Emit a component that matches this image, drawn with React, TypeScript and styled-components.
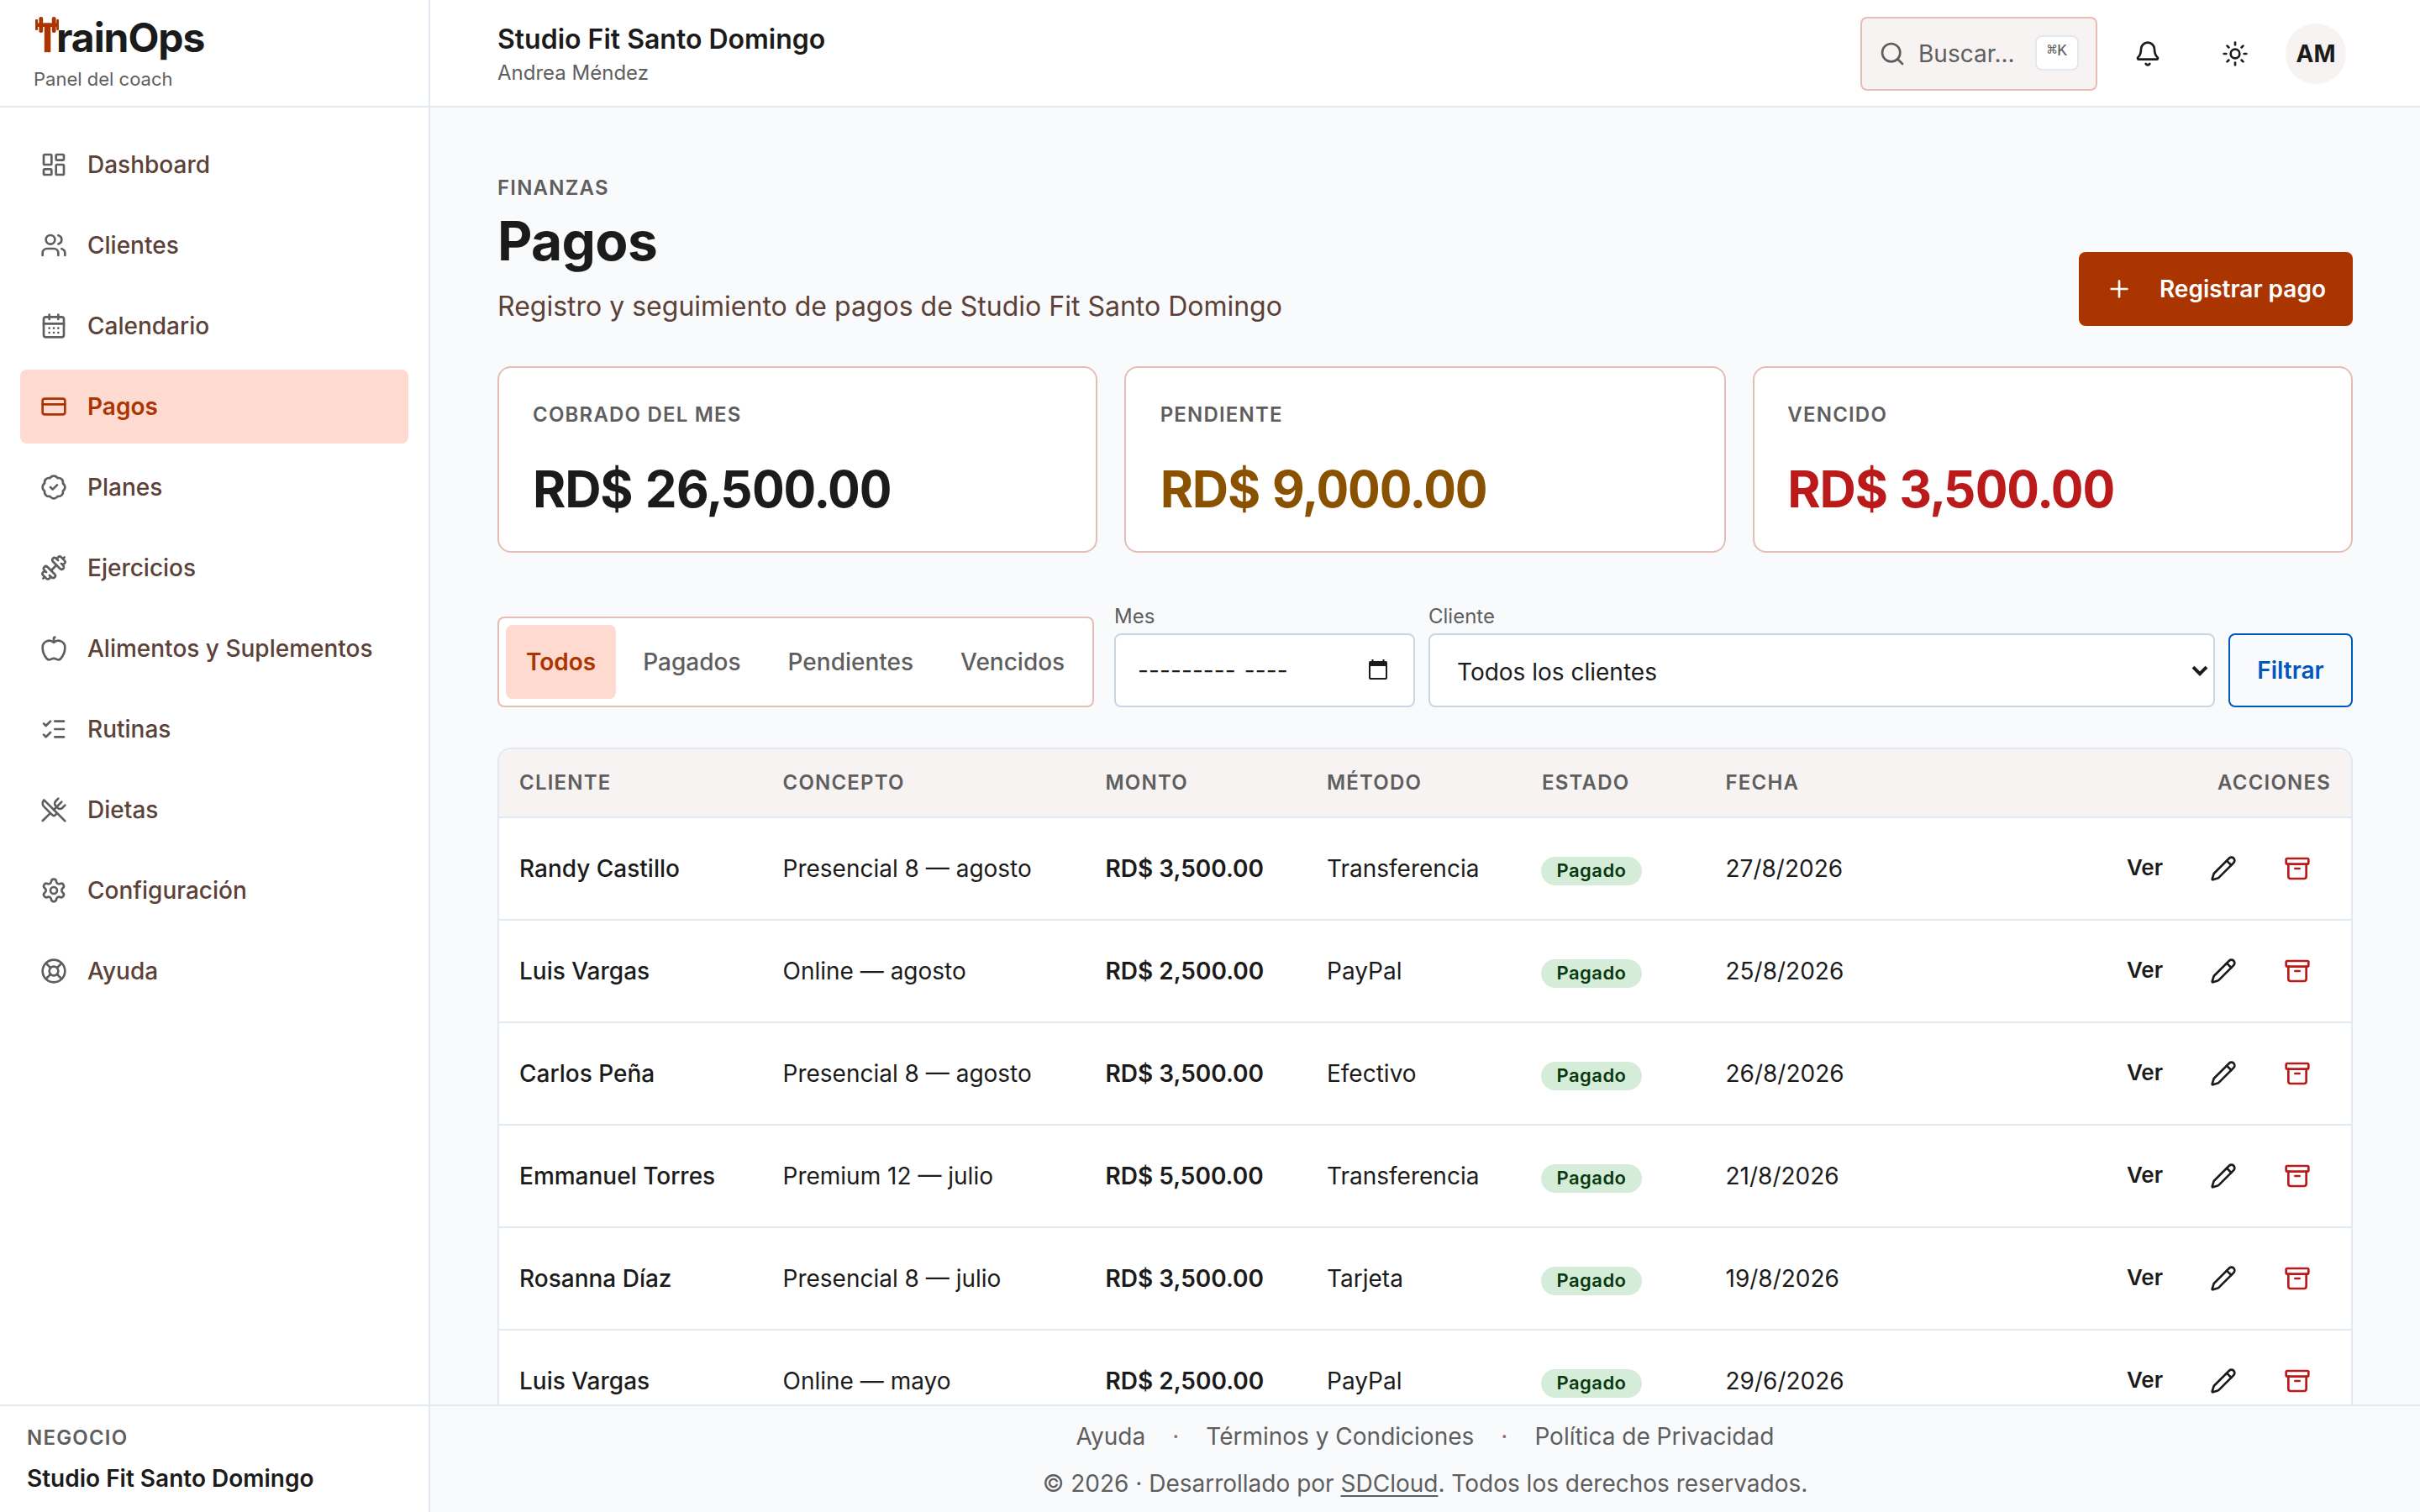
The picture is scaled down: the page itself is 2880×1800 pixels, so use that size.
import React from 'react';
import styled, { createGlobalStyle } from 'styled-components';
import {
  Apple, Archive, BadgeCheck, Bell, CalendarDays, CreditCard, Dumbbell, LayoutDashboard,
  LifeBuoy, ListChecks, Pencil, Plus, Search, Settings, Sun, Users, UtensilsCrossed,
} from 'lucide-react';

const c = {
  bg: '#f8fafc',
  white: '#ffffff',
  line: '#e2e8f0',
  field: '#cbd5e1',
  blush: '#e4beb4',
  peach: '#ffdad0',
  primary: '#ab3500',
  ink: '#1c1b1b',
  brown: '#5b4137',
  gray: '#5f5e5e',
  soft: '#f6f3f2',
  blue: '#0058be',
  amber: '#8a5100',
  red: '#ba1a1a',
};

const GlobalStyle = createGlobalStyle`
  *, *::before, *::after { box-sizing: border-box; }
  body {
    margin: 0;
    background: ${c.bg};
    color: ${c.ink};
    font-family: Inter, "Liberation Sans", sans-serif;
    font-size: 28px;
    line-height: 40px;
    -webkit-font-smoothing: antialiased;
  }
  button { font: inherit; color: inherit; border: 0; background: none; padding: 0; }
  a { color: inherit; text-decoration: none; }
  h1, p { margin: 0; }
  svg { display: block; flex: none; }
`;

const Shell = styled.div`
  display: grid;
  grid-template-columns: 512px 1fr;
  height: 1800px;
  overflow: hidden;
`;

const Sidebar = styled.aside`
  display: flex;
  flex-direction: column;
  background: ${c.white};
  border-right: 2px solid ${c.line};
`;

const Brand = styled.div`
  height: 128px;
  padding: 16px 40px 0;
  border-bottom: 2px solid ${c.line};
`;

const Logo = styled.div`
  display: flex;
  height: 60px;
  font-size: 48px;
  line-height: 58px;
  font-weight: 700;
  letter-spacing: -1.06px;
  svg { margin-right: -3px; }
`;

const Tagline = styled.p`
  margin-top: 2px;
  font-size: 22px;
  line-height: 32px;
  color: ${c.gray};
`;

const Nav = styled.nav`
  flex: 1;
  display: flex;
  flex-direction: column;
  gap: 8px;
  padding: 24px 24px 0;
`;

const NavItem = styled.a<{ $active?: boolean }>`
  display: flex;
  align-items: center;
  gap: 24px;
  height: 88px;
  padding: 0 24px;
  border-radius: 8px;
  font-weight: ${(p) => (p.$active ? 600 : 500)};
  color: ${(p) => (p.$active ? c.primary : c.brown)};
  background: ${(p) => (p.$active ? c.peach : 'transparent')};
  svg { color: ${(p) => (p.$active ? c.primary : c.gray)}; }
`;

const Business = styled.div`
  height: 128px;
  padding: 22px 32px 0;
  border-top: 2px solid ${c.line};
`;

const Overline = styled.p`
  font-size: 24px;
  line-height: 32px;
  font-weight: 600;
  letter-spacing: 1.2px;
  text-transform: uppercase;
  color: ${c.gray};
`;

const BusinessName = styled.p`
  margin-top: 12px;
  font-weight: 600;
`;

const Main = styled.div`
  display: flex;
  flex-direction: column;
  min-width: 0;
  height: 1800px;
`;

const Topbar = styled.header`
  flex: none;
  display: flex;
  align-items: center;
  justify-content: space-between;
  height: 128px;
  padding: 2px 88px 0 80px;
  background: ${c.white};
  border-bottom: 2px solid ${c.line};
`;

const TopTitle = styled.p`
  font-size: 32px;
  line-height: 42px;
  font-weight: 600;
`;

const TopUser = styled.p`
  margin: 3px 0 -1px;
  font-size: 24px;
  line-height: 32px;
  color: ${c.gray};
`;

const Tools = styled.div`
  display: flex;
  align-items: center;
  gap: 16px;
`;

const SearchBox = styled.button`
  display: flex;
  align-items: center;
  width: 282px;
  height: 88px;
  padding: 0 20px;
  border: 2px solid ${c.blush};
  border-radius: 8px;
  background: ${c.soft};
  color: ${c.gray};
`;

const SearchLabel = styled.span`
  flex: 1;
  margin-left: 15px;
  text-align: left;
`;

const Kbd = styled.kbd`
  width: 52px;
  height: 42px;
  margin-top: -2px;
  border: 2px solid ${c.line};
  border-radius: 8px;
  background: ${c.white};
  font-family: "Liberation Mono", "DejaVu Sans Mono", monospace;
  font-size: 20px;
  line-height: 34px;
  text-align: center;
`;

const IconButton = styled.button`
  display: grid;
  place-items: center;
  width: 88px;
  height: 88px;
`;

const Avatar = styled.span`
  display: grid;
  place-items: center;
  width: 72px;
  height: 72px;
  border-radius: 50%;
  background: ${c.soft};
  font-weight: 700;
`;

const Content = styled.main`
  flex: 1;
  min-height: 0;
  overflow: hidden;
  padding: 80px 80px 0;
`;

const PageHead = styled.div`
  display: flex;
  justify-content: space-between;
  align-items: flex-end;
  height: 180px;
`;

const PageTitle = styled.h1`
  margin-top: 8px;
  font-size: 64px;
  line-height: 77px;
  font-weight: 700;
  letter-spacing: -0.64px;
`;

const Lead = styled.p`
  margin: 16px 0 -1px;
  font-size: 32px;
  line-height: 48px;
  color: ${c.brown};
`;

const PrimaryButton = styled.button`
  display: flex;
  align-items: center;
  gap: 32px;
  height: 88px;
  padding: 0 32px;
  border-radius: 8px;
  background: ${c.primary};
  color: ${c.white};
  font-weight: 600;
`;

const Cards = styled.section`
  display: grid;
  grid-template-columns: 714px 716px 714px;
  gap: 32px;
  margin-top: 48px;
`;

const Card = styled.article`
  height: 222px;
  padding: 40px;
  border: 2px solid ${c.blush};
  border-radius: 16px;
  background: ${c.white};
  &:nth-child(2) { padding-left: 40.67px; }
  &:nth-child(3) { padding-left: 39.33px; }
`;

const Amount = styled.p<{ $tone: string }>`
  margin-top: 36px;
  font-size: 60px;
  line-height: 72px;
  font-weight: 700;
  font-variant-numeric: tabular-nums;
  letter-spacing: -1.2px;
  color: ${(p) => p.$tone};
`;

const Filters = styled.section`
  display: flex;
  align-items: flex-end;
  height: 136px;
  margin-top: 48px;
`;

const Tabs = styled.div`
  display: flex;
  gap: 8px;
  width: 710px;
  height: 108px;
  padding: 8px;
  border: 2px solid ${c.blush};
  border-radius: 8px;
  background: ${c.white};
`;

const Tab = styled.button<{ $active?: boolean }>`
  height: 88px;
  padding: 0 24px;
  border-radius: 8px;
  font-weight: ${(p) => (p.$active ? 600 : 500)};
  color: ${(p) => (p.$active ? c.primary : c.gray)};
  background: ${(p) => (p.$active ? c.peach : 'transparent')};
`;

const Field = styled.label<{ $width: number; $gap: number }>`
  width: ${(p) => p.$width}px;
  margin-left: ${(p) => p.$gap}px;
  font-size: 24px;
  line-height: 32px;
  color: ${c.gray};
`;

const FieldBox = styled.span<{ $pad: string }>`
  display: flex;
  align-items: center;
  justify-content: space-between;
  height: 88px;
  margin-top: 4px;
  padding: ${(p) => p.$pad};
  border: 2px solid ${c.field};
  border-radius: 8px;
  background: ${c.white};
  color: ${c.ink};
  font-size: 28px;
  svg { margin-bottom: 2px; }
`;

const MonthValue = styled.span`
  word-spacing: 2px;
  letter-spacing: 0.1px;
`;

const OutlineButton = styled.button`
  width: 148px;
  height: 88px;
  margin-left: 16px;
  border: 2px solid ${c.blue};
  border-radius: 8px;
  color: ${c.blue};
  font-weight: 600;
`;

const TableWrap = styled.section`
  margin-top: 48px;
  border: 2px solid ${c.line};
  border-radius: 16px;
  background: ${c.white};
  overflow: hidden;
`;

const Table = styled.table`
  width: 100%;
  border-collapse: separate;
  border-spacing: 0;
  table-layout: fixed;
`;

const Th = styled.th<{ $right?: boolean }>`
  height: 82px;
  padding: 0 24px;
  border-bottom: 2px solid ${c.line};
  background: ${c.soft};
  color: ${c.gray};
  font-size: 24px;
  font-weight: 600;
  letter-spacing: 1.2px;
  text-transform: uppercase;
  text-align: ${(p) => (p.$right ? 'right' : 'left')};
`;

const Td = styled.td<{ $weight?: number }>`
  height: 122px;
  padding: 0 24px;
  border-bottom: 2px solid ${c.line};
  font-weight: ${(p) => p.$weight ?? 400};
  white-space: nowrap;
`;

const Badge = styled.span`
  display: block;
  width: 120px;
  height: 34px;
  margin: 6px 0 0 -1px;
  border-radius: 17px;
  background: #d5ecd8;
  color: #08390f;
  font-size: 22px;
  line-height: 33px;
  font-weight: 600;
  letter-spacing: 0.44px;
  text-align: center;
`;

const Actions = styled.div`
  display: flex;
  justify-content: flex-end;
  align-items: center;
`;

const ViewLink = styled.a`
  margin-right: 28px;
  padding-bottom: 2px;
  font-size: 26px;
  font-weight: 600;
`;

const RowAction = styled(IconButton)<{ $danger?: boolean }>`
  color: ${(p) => (p.$danger ? c.red : c.ink)};
  &:last-child { margin-right: -4px; }
`;

const Footer = styled.footer`
  flex: none;
  display: flex;
  flex-direction: column;
  align-items: center;
  gap: 16px;
  height: 128px;
  padding-top: 16px;
  border-top: 2px solid ${c.line};
  background: ${c.bg};
  color: ${c.gray};
`;

const FooterLinks = styled.nav`
  display: flex;
  gap: 32px;
`;

const FooterDot = styled.span`
  color: #8f7066;
`;

const Underlined = styled.a`
  text-decoration: underline;
  text-underline-offset: 4px;
`;

const LogoMark = () => (
  <svg width="30" height="48" viewBox="0 0 30 48" fill={c.primary}>
    <rect x="2" y="11.5" width="28" height="4.5" />
    <rect x="12.8" y="11.5" width="7.5" height="34.7" />
    <rect x="2" y="7" width="3" height="13" rx="1" />
    <rect x="6.4" y="4" width="4.8" height="19" rx="2.2" />
    <rect x="21.8" y="4" width="4.8" height="19" rx="2.2" />
    <rect x="27.2" y="7" width="2.8" height="13" rx="1" />
  </svg>
);

const MonthIcon = () => (
  <svg width="22" height="24" viewBox="0 0 22 24" fill={c.ink}>
    <path fillRule="evenodd" d="M3.500 0h2v2h11V0h2v2H20a2 2 0 0 1 2 2v18a2 2 0 0 1-2 2H2a2 2 0 0 1-2-2V4a2 2 0 0 1 2-2h1.500zM2 8v14h18V8z" />
  </svg>
);

const SelectArrow = () => (
  <svg width="20" height="14" viewBox="0 0 20 14" fill="none" stroke={c.ink} strokeWidth="4">
    <path d="M2 2.200l8 8 8-8" />
  </svg>
);

const nav = [
  { label: 'Dashboard', Icon: LayoutDashboard },
  { label: 'Clientes', Icon: Users },
  { label: 'Calendario', Icon: CalendarDays },
  { label: 'Pagos', Icon: CreditCard, active: true },
  { label: 'Planes', Icon: BadgeCheck },
  { label: 'Ejercicios', Icon: Dumbbell },
  { label: 'Alimentos y Suplementos', Icon: Apple },
  { label: 'Rutinas', Icon: ListChecks },
  { label: 'Dietas', Icon: UtensilsCrossed },
  { label: 'Configuración', Icon: Settings },
  { label: 'Ayuda', Icon: LifeBuoy },
];

const summary = [
  { label: 'Cobrado del mes', value: 'RD$ 26,500.00', tone: c.ink },
  { label: 'Pendiente', value: 'RD$ 9,000.00', tone: c.amber },
  { label: 'Vencido', value: 'RD$ 3,500.00', tone: c.red },
];

const payments = [
  ['Randy Castillo', 'Presencial 8 — agosto', 'RD$ 3,500.00', 'Transferencia', '27/8/2026'],
  ['Luis Vargas', 'Online — agosto', 'RD$ 2,500.00', 'PayPal', '25/8/2026'],
  ['Carlos Peña', 'Presencial 8 — agosto', 'RD$ 3,500.00', 'Efectivo', '26/8/2026'],
  ['Emmanuel Torres', 'Premium 12 — julio', 'RD$ 5,500.00', 'Transferencia', '21/8/2026'],
  ['Rosanna Díaz', 'Presencial 8 — julio', 'RD$ 3,500.00', 'Tarjeta', '19/8/2026'],
  ['Luis Vargas', 'Online — mayo', 'RD$ 2,500.00', 'PayPal', '29/6/2026'],
];

const columnWidths = [313.5, 384, 263.5, 256, 218.5];

export default function App() {
  return (
    <Shell>
      <GlobalStyle />
      <Sidebar>
        <Brand>
          <Logo aria-label="TrainOps"><LogoMark />rainOps</Logo>
          <Tagline>Panel del coach</Tagline>
        </Brand>
        <Nav>
          {nav.map(({ label, Icon, active }) => (
            <NavItem key={label} $active={active}>
              <Icon size={32} />
              {label}
            </NavItem>
          ))}
        </Nav>
        <Business>
          <Overline>Negocio</Overline>
          <BusinessName>Studio Fit Santo Domingo</BusinessName>
        </Business>
      </Sidebar>
      <Main>
        <Topbar>
          <div>
            <TopTitle>Studio Fit Santo Domingo</TopTitle>
            <TopUser>Andrea Méndez</TopUser>
          </div>
          <Tools>
            <SearchBox>
              <Search size={32} />
              <SearchLabel>Buscar...</SearchLabel>
              <Kbd>⌘K</Kbd>
            </SearchBox>
            <IconButton><Bell size={32} /></IconButton>
            <IconButton><Sun size={32} /></IconButton>
            <Avatar>AM</Avatar>
          </Tools>
        </Topbar>
        <Content>
          <PageHead>
            <div>
              <Overline>Finanzas</Overline>
              <PageTitle>Pagos</PageTitle>
              <Lead>Registro y seguimiento de pagos de Studio Fit Santo Domingo</Lead>
            </div>
            <PrimaryButton><Plus size={32} />Registrar pago</PrimaryButton>
          </PageHead>
          <Cards>
            {summary.map((s) => (
              <Card key={s.label}>
                <Overline>{s.label}</Overline>
                <Amount $tone={s.tone}>{s.value}</Amount>
              </Card>
            ))}
          </Cards>
          <Filters>
            <Tabs>
              <Tab $active>Todos</Tab>
              <Tab>Pagados</Tab>
              <Tab>Pendientes</Tab>
              <Tab>Vencidos</Tab>
            </Tabs>
            <Field $width={358} $gap={24}>
              Mes
              <FieldBox $pad="0 31px 0 26px"><MonthValue>--------- ----</MonthValue><MonthIcon /></FieldBox>
            </Field>
            <Field $width={936} $gap={16}>
              Cliente
              <FieldBox $pad="3px 6px 0 32px"><span>Todos los clientes</span><SelectArrow /></FieldBox>
            </Field>
            <OutlineButton>Filtrar</OutlineButton>
          </Filters>
          <TableWrap>
            <Table>
              <colgroup>
                {columnWidths.map((w, i) => <col key={i} width={w} />)}
                <col />
              </colgroup>
              <thead>
                <tr>
                  <Th>Cliente</Th>
                  <Th>Concepto</Th>
                  <Th>Monto</Th>
                  <Th>Método</Th>
                  <Th>Estado</Th>
                  <Th>Fecha</Th>
                  <Th $right>Acciones</Th>
                </tr>
              </thead>
              <tbody>
                {payments.map(([client, concept, amount, method, date], i) => (
                  <tr key={i}>
                    <Td $weight={500}>{client}</Td>
                    <Td>{concept}</Td>
                    <Td $weight={600}>{amount}</Td>
                    <Td>{method}</Td>
                    <Td><Badge>Pagado</Badge></Td>
                    <Td>{date}</Td>
                    <Td>
                      <Actions>
                        <ViewLink>Ver</ViewLink>
                        <RowAction><Pencil size={32} /></RowAction>
                        <RowAction $danger><Archive size={32} /></RowAction>
                      </Actions>
                    </Td>
                  </tr>
                ))}
              </tbody>
            </Table>
          </TableWrap>
        </Content>
        <Footer>
          <FooterLinks>
            <a>Ayuda</a>
            <FooterDot>·</FooterDot>
            <a>Términos y Condiciones</a>
            <FooterDot>·</FooterDot>
            <a>Política de Privacidad</a>
          </FooterLinks>
          <p>© 2026 · Desarrollado por <Underlined>SDCloud</Underlined>. Todos los derechos reservados.</p>
        </Footer>
      </Main>
    </Shell>
  );
}
